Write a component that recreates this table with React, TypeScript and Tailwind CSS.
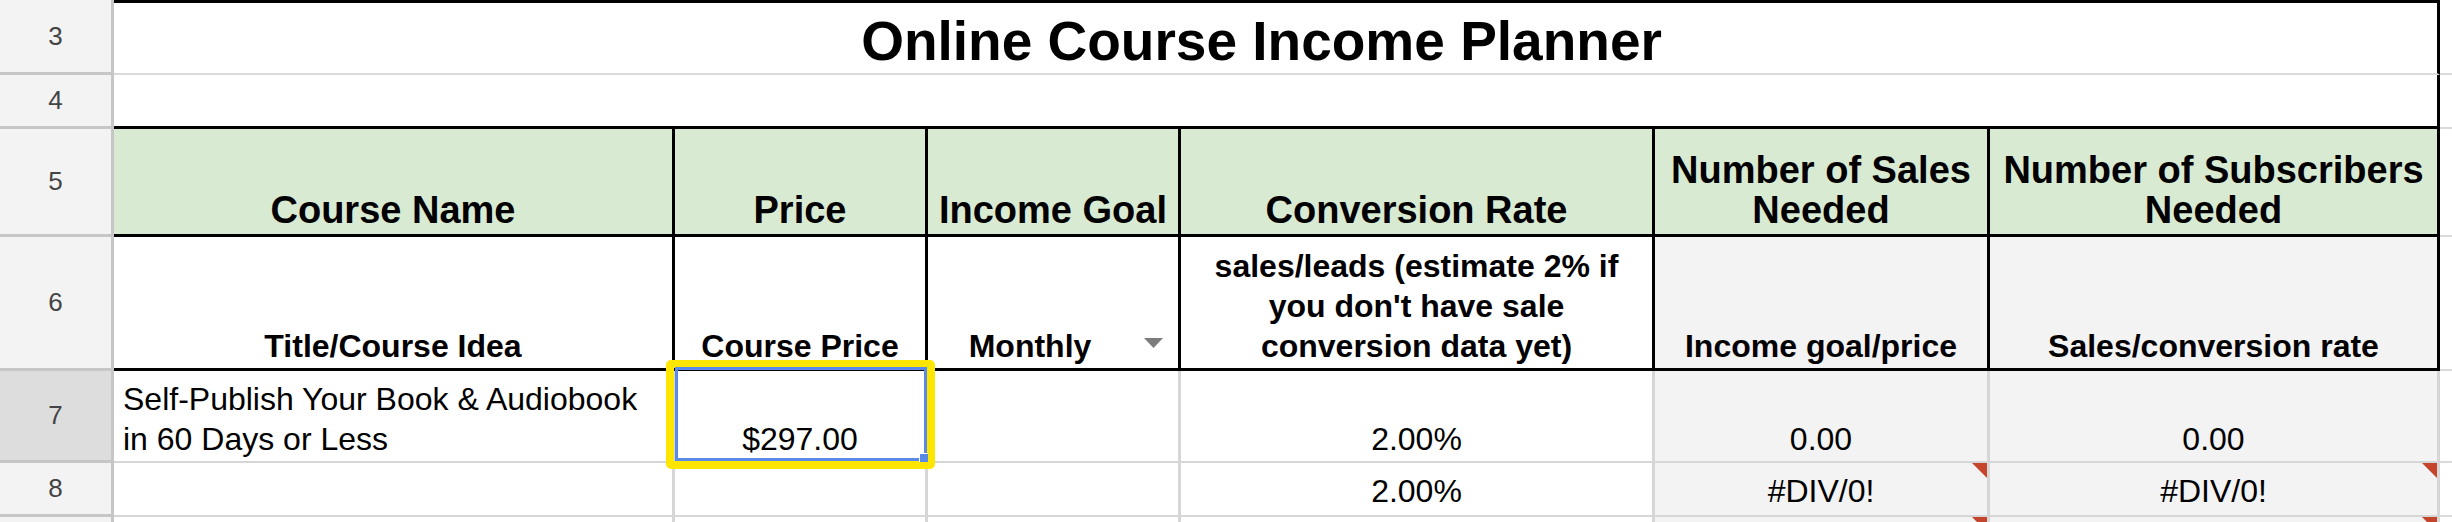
import * as React from "react";

const font = "font-['Liberation_Sans',Arial,sans-serif]";

type HeadProps = { n?: number; active?: boolean };

function RowHead({ n, active }: HeadProps) {
  return (
    <div
      className={`flex items-center justify-center border-r-[3px] border-b-[3px] border-[#c6c6c6] text-[26px] text-[#444] ${
        active ? "bg-[#dddddd]" : "bg-[#f3f3f3]"
      }`}
    >
      {n}
    </div>
  );
}

function ErrorMark() {
  return (
    <svg className="absolute right-0 top-0" width="15" height="15" viewBox="0 0 15 15">
      <polygon points="0,0 15,0 15,15" fill="#c4452c" />
    </svg>
  );
}

function Filler({ cls = "" }: { cls?: string }) {
  return <div className={`border-b-2 border-[#dadada] bg-white ${cls}`} />;
}

const headCell =
  "flex items-end justify-center border-r-[3px] border-b-[3px] border-black bg-[#d9ead3] px-1 pb-[4px] text-center text-[38px] font-bold leading-[40px]";
const subCell =
  "flex items-end justify-center border-r-[3px] border-b-[3px] border-black px-1 pb-[2px] text-center text-[32px] font-bold leading-[40px]";
const dataCell =
  "relative flex items-end justify-center border-r-[3px] border-b-2 border-[#d6d6d6] px-1 text-center text-[32px] leading-[40px]";

export default function App() {
  return (
    <div className={`relative h-[522px] w-[2452px] overflow-hidden bg-white text-black ${font}`}>
      <div className="grid grid-cols-[114px_561px_253px_253px_474px_335px_450px_1fr] grid-rows-[75px_54px_108px_134px_92px_54px_60px]">
        {/* row 3 */}
        <RowHead n={3} />
        <div className="col-span-6 flex items-end justify-center border-t-[3px] border-r-[3px] border-t-black border-r-black border-b-2 border-b-[#dadada] pb-[5px] pr-[28px] text-[55px] font-bold leading-[54px]">
          Online Course Income Planner
        </div>
        <Filler />

        {/* row 4 */}
        <RowHead n={4} />
        <div className="col-span-6 border-r-[3px] border-b-[3px] border-black" />
        <Filler />

        {/* row 5 */}
        <RowHead n={5} />
        <div className={headCell}>Course Name</div>
        <div className={headCell}>Price</div>
        <div className={headCell}>Income Goal</div>
        <div className={headCell}>Conversion Rate</div>
        <div className={headCell}>
          Number of Sales
          <br />
          Needed
        </div>
        <div className={headCell}>
          Number of Subscribers
          <br />
          Needed
        </div>
        <Filler />

        {/* row 6 */}
        <RowHead n={6} />
        <div className={subCell}>Title/Course Idea</div>
        <div className={subCell}>Course Price</div>
        <div className="flex items-end border-r-[3px] border-b-[3px] border-black pb-[2px] text-[32px] font-bold leading-[40px]">
          <span className="flex-1 text-center">Monthly</span>
          <svg className="mb-[18px] ml-[12px] mr-[15px] shrink-0" width="19" height="10" viewBox="0 0 19 10">
            <polygon points="0,0 19,0 9.5,10" fill="#7c7c7c" />
          </svg>
        </div>
        <div className={subCell}>
          sales/leads (estimate 2% if
          <br />
          you don't have sale
          <br />
          conversion data yet)
        </div>
        <div className={`${subCell} bg-[#f3f3f3]`}>Income goal/price</div>
        <div className={`${subCell} bg-[#f3f3f3]`}>Sales/conversion rate</div>
        <Filler />

        {/* row 7 */}
        <RowHead n={7} active />
        <div className={`${dataCell} justify-start! pb-[2px] pl-[9px] text-left`}>
          Self-Publish Your Book &amp; Audiobook
          <br />
          in 60 Days or Less
        </div>
        <div className={`${dataCell} pb-[2px]`}>
          $297.00
          <div className="pointer-events-none absolute -top-[11px] -right-[10px] -bottom-[8px] -left-[9px] z-10 rounded-[5px] border-[8px] border-[#ffe600]" />
          <div className="pointer-events-none absolute -top-[4px] -right-[2px] bottom-0 left-0 z-10 border-[3px] border-[#5a8ae8]" />
          <div className="absolute -right-[3px] -bottom-[1px] z-10 h-[9px] w-[9px] border-l border-t border-white bg-[#5a8ae8]" />
        </div>
        <div className={dataCell} />
        <div className={`${dataCell} pb-[2px]`}>2.00%</div>
        <div className={`${dataCell} bg-[#f3f3f3] pb-[2px]`}>0.00</div>
        <div className={`${dataCell} bg-[#f3f3f3] pb-[2px]`}>0.00</div>
        <Filler />

        {/* row 8 */}
        <RowHead n={8} />
        <div className={dataCell} />
        <div className={dataCell} />
        <div className={dataCell} />
        <div className={`${dataCell} pb-[4px]`}>2.00%</div>
        <div className={`${dataCell} bg-[#f3f3f3] pb-[4px]`}>
          #DIV/0!
          <ErrorMark />
        </div>
        <div className={`${dataCell} bg-[#f3f3f3] pb-[4px]`}>
          #DIV/0!
          <ErrorMark />
        </div>
        <Filler />

        {/* row 9, only its top edge is in view */}
        <RowHead />
        <div className={dataCell} />
        <div className={dataCell} />
        <div className={dataCell} />
        <div className={dataCell} />
        <div className={`${dataCell} bg-[#f3f3f3]`}>
          <ErrorMark />
        </div>
        <div className={`${dataCell} bg-[#f3f3f3]`}>
          <ErrorMark />
        </div>
        <Filler />
      </div>
    </div>
  );
}
